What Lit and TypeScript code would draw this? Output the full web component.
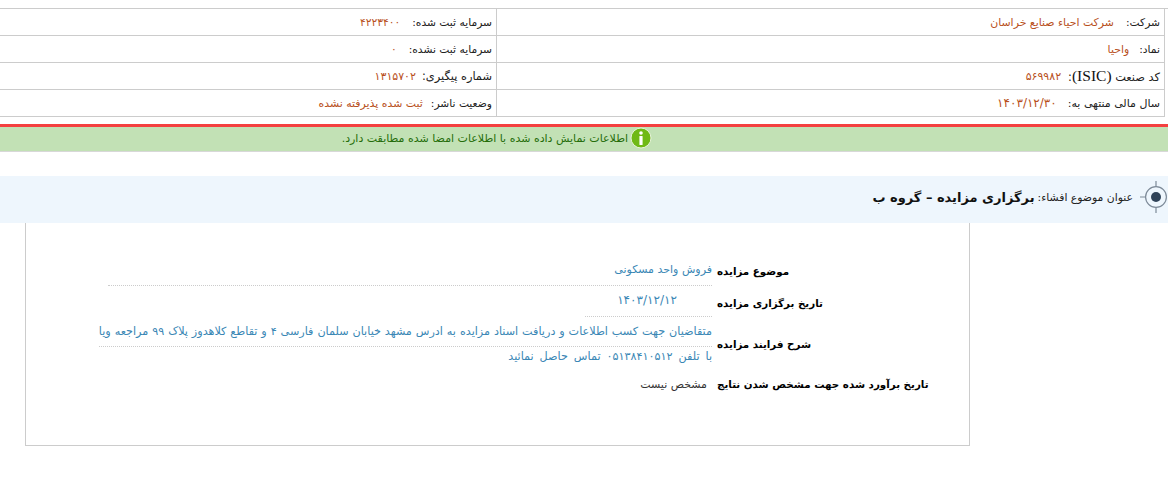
import { LitElement, html, css } from "lit";
import { customElement } from "lit/decorators.js";

interface Cell { label: unknown; value: string; gap: number; kind: string; size?: string; }

@customElement("app-root")
export class AppRoot extends LitElement {
  static styles = css`
    :host { display: block; width: 1168px; height: 488px; overflow: hidden; background: #fff; font-family: "DejaVu Sans", sans-serif; font-size: 11px; color: #222; padding-top: 8px; box-sizing: border-box; }
    .info { display: grid; grid-template-columns: 497px 668px; border-top: 1px solid #ccc; }
    .cell { height: 26px; border-bottom: 1px solid #ccc; border-right: 1px solid #ccc; display: flex; align-items: center; justify-content: flex-start; direction: rtl; padding-right: 4px; }
    .l { color: #222; font-size: 10.7px; white-space: nowrap; }
    .l.wide { font-size: 11.4px; }
    .l.mid { font-size: 11px; }
    .isic { font-family: "Liberation Serif", serif; font-size: 15.5px; color: #111; }
    .v { color: #b8501c; font-size: 10.9px; white-space: nowrap; }
    .v.num { font-size: 10.7px; }
    .v.tight { font-size: 11px; letter-spacing: 0.3px; }
    .v.date { font-size: 12px; letter-spacing: 0.9px; }
    .v.code { font-size: 11px; letter-spacing: 1.5px; }
    .red { height: 3px; background: #f44040; margin-top: 7px; }
    .ok { height: 25px; background: #c2e1b5; border-bottom: 1px solid #d8d8d8; box-sizing: border-box; display: flex; direction: rtl; align-items: center; padding: 0 516px 2px 0; gap: 2px; color: #256d0a; }
    .ok svg { flex: none; }
    .title { margin-top: 24px; height: 47px; padding-bottom: 5px; box-sizing: border-box; background: #eef6fd; display: flex; direction: rtl; align-items: center; color: #222; font-size: 10.8px; }
    .title svg { flex: none; margin-left: 7px; }
    .title b { font-size: 13px; color: #111; margin-right: 3px; }
    .box { margin: 0 198px 0 25px; height: 223px; border: 1px solid #ccc; border-top: 0; box-sizing: border-box; padding-top: 36px; }
    .row { display: grid; grid-template-columns: 613px auto; column-gap: 5px; margin-left: 73px; }
    .val { justify-self: end; direction: rtl; color: #3a87b5; }
    .lab { direction: rtl; text-align: left; justify-self: start; font-weight: bold; font-size: 10.3px; color: #000; align-self: center; }
    .r1 { height: 26px; }
    .r1 .val { width: 604px; height: 26px; line-height: 22px; border-bottom: 1px dotted #ccc; }
    .r1 .lab { padding-bottom: 4px; }
    .r2 { height: 32px; }
    .r2 .val { width: 127px; height: 32px; line-height: 30px; border-bottom: 1px dotted #ccc; text-align: center; box-sizing: border-box; padding-right: 3px; font-size: 12px; letter-spacing: 0.9px; }
    .r2 .lab { padding-top: 4px; }
    .r3 { margin-top: 3px; height: 47px; }
    .r3 .val { width: 613px; font-size: 11.2px; word-spacing: 0.37px; white-space: nowrap; }
    .first { line-height: 24px; padding-bottom: 2px; border-bottom: 1px dotted #ccc; }
    .second { line-height: 20px; word-spacing: 2.4px; }
    .r4 { margin-top: 4px; height: 26px; }
    .r4 .val { color: #333; padding-right: 5px; align-self: center; }
  `;

  render() {
    const cells: Cell[] = [
      { label: "سرمایه ثبت شده:", value: "۴۲۲۳۴۰۰", gap: 12, kind: "num" },
      { label: "شرکت:", value: "شرکت احیاء صنایع خراسان", gap: 12, kind: "" },
      { label: "سرمایه ثبت نشده:", value: "۰", gap: 12, kind: "num" },
      { label: "نماد:", value: "واحیا", gap: 10, kind: "" },
      { label: "شماره پیگیری:", value: "۱۳۱۵۷۰۲", gap: 6, kind: "code", size: "wide" },
      { label: html`کد صنعت <span class="isic">(ISIC)</span>:`, value: "۵۶۹۹۸۲", gap: 7, kind: "tight", size: "wide" },
      { label: "وضعیت ناشر:", value: "ثبت شده پذیرفته نشده", gap: 8, kind: "" },
      { label: "سال مالی منتهی به:", value: "۱۴۰۳/۱۲/۳۰", gap: 11, kind: "date", size: "mid" },
    ];
    return html`
      <div class="info">
        ${cells.map((c) => html`<div class="cell" style="gap:${c.gap}px"><span class="l ${c.size ?? ""}">${c.label}</span><span class="v ${c.kind}">${c.value}</span></div>`)}
      </div>
      <div class="red"></div>
      <div class="ok">
        <svg width="22" height="22" viewBox="0 0 22 22"><circle cx="11" cy="11" r="10" fill="#6fb916" stroke="#e6f3d8" stroke-width="1"/><circle cx="11" cy="6" r="1.8" fill="#fff"/><rect x="9.4" y="9" width="3.2" height="9" rx="0.6" fill="#fff"/></svg>
        <span>اطلاعات نمایش داده شده با اطلاعات امضا شده مطابقت دارد.</span>
      </div>
      <div class="title">
        <svg width="28" height="34" viewBox="0 0 28 34"><g fill="none" stroke="#7d8a98" stroke-width="1.2"><circle cx="16" cy="17" r="10.4"/><path d="M16 1v6M16 27v6M0 17h6"/></g><circle cx="16" cy="17" r="5" fill="#2f4258"/></svg>
        <span>عنوان موضوع افشاء:</span><b>برگزاری مزایده – گروه ب</b>
      </div>
      <div class="box">
        <div class="row r1"><div class="val">فروش واحد مسکونی</div><div class="lab">موضوع مزایده</div></div>
        <div class="row r2"><div class="val">۱۴۰۳/۱۲/۱۲</div><div class="lab">تاریخ برگزاری مزایده</div></div>
        <div class="row r3"><div class="val"><div class="first">متقاضیان جهت کسب اطلاعات و دریافت اسناد مزایده به ادرس مشهد خیابان سلمان فارسی ۴ و تقاطع کلاهدوز پلاک ۹۹ مراجعه ویا</div><div class="second">با تلفن ۰۵۱۳۸۴۱۰۵۱۲ تماس حاصل نمائید</div></div><div class="lab">شرح فرایند مزایده</div></div>
        <div class="row r4"><div class="val">مشخص نیست</div><div class="lab">تاریخ برآورد شده جهت مشخص شدن نتایج</div></div>
      </div>
    `;
  }
}
